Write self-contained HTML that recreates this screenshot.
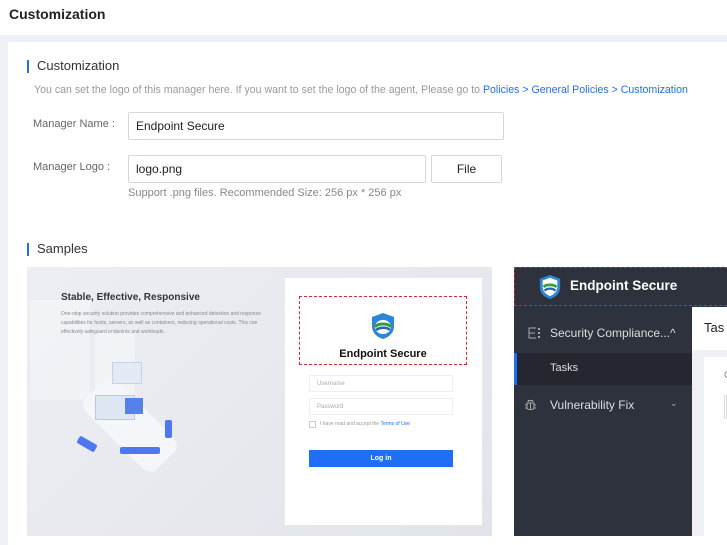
<!DOCTYPE html>
<html><head><style>
*{margin:0;padding:0;box-sizing:border-box}
body{width:727px;height:545px;overflow:hidden;background:#edf0f5;font-family:"Liberation Sans",sans-serif;position:relative}
.a{position:absolute}
.hdr{left:0;top:0;width:727px;height:35px;background:#fff}
.card{left:8px;top:42px;width:719px;height:503px;background:#fff}
.lbl{color:#666;font-size:12px}
.inp{border:1px solid #d4d7de;border-radius:2px;background:#fff;font-size:12px;color:#222;padding-left:7px;line-height:26px}
</style></head><body>
<div class="a hdr"><div class="a" style="left:9px;top:6px;font-size:14px;font-weight:bold;color:#222">Customization</div></div>
<div class="a card"></div>
<div class="a" style="left:27px;top:60px;width:2px;height:13px;background:#1e6ff5"></div>
<div class="a" style="left:37px;top:58px;font-size:13px;color:#333">Customization</div>
<div class="a" style="left:34px;top:84px;font-size:10.6px;color:#999;white-space:nowrap">You can set the logo of this manager here. If you want to set the logo of the agent, Please go to <span style="color:#1e6ff5">Policies &gt; General Policies &gt; Customization</span></div>
<div class="a lbl" style="left:33px;top:118px;font-size:11px">Manager Name :</div>
<div class="a inp" style="left:128px;top:112px;width:376px;height:28px">Endpoint Secure</div>
<div class="a lbl" style="left:33px;top:161px;font-size:11px">Manager Logo :</div>
<div class="a inp" style="left:128px;top:155px;width:298px;height:28px">logo.png</div>
<div class="a inp" style="left:431px;top:155px;width:71px;height:28px;padding:0;text-align:center">File</div>
<div class="a" style="left:128px;top:187px;font-size:11px;color:#888">Support .png files. Recommended Size: 256 px * 256 px</div>
<div class="a" style="left:27px;top:243px;width:2px;height:13px;background:#1e6ff5"></div>
<div class="a" style="left:37px;top:241px;font-size:13px;color:#333">Samples</div>
<!-- sample 1 -->
<div class="a" style="left:27px;top:267px;width:465px;height:269px;background:linear-gradient(135deg,#eceef3,#e6e8ee 60%,#e1e4ea)"></div>
<div class="a" style="left:30px;top:300px;width:60px;height:100px;background:#f2f4f8;opacity:.8"></div>
<div class="a" style="left:95px;top:330px;width:40px;height:80px;background:#f3f5f9;opacity:.8"></div>
<div class="a" style="left:80px;top:385px;width:100px;height:80px;background:#f4f6fa;border-radius:14px;transform:rotate(45deg) scaleY(.55)"></div>
<div class="a" style="left:77px;top:440px;width:20px;height:8px;background:#4d78ee;border-radius:2px;transform:rotate(30deg)"></div>
<div class="a" style="left:120px;top:447px;width:40px;height:7px;background:#4d78ee;border-radius:2px"></div>
<div class="a" style="left:165px;top:420px;width:7px;height:18px;background:#4d78ee;border-radius:2px"></div>
<div class="a" style="left:95px;top:395px;width:40px;height:25px;background:#dfe6f3;border:1px solid #b8c8e6"></div>
<div class="a" style="left:112px;top:362px;width:30px;height:22px;background:#e4eaf5;border:1px solid #c4d2ea"></div>
<div class="a" style="left:125px;top:398px;width:18px;height:16px;background:#5582ea"></div>
<div class="a" style="left:61px;top:292px;font-size:10px;font-weight:bold;color:#333">Stable, Effective, Responsive</div>
<div class="a" style="left:61px;top:310px;width:200px;font-size:5px;line-height:9px;color:#888">One-stop security solution provides comprehensive and enhanced detection and response capabilities for hosts, servers, as well as containers, reducing operational costs. This can effectively safeguard endpoints and workloads.</div>
<div class="a" style="left:285px;top:278px;width:197px;height:247px;background:#fff"></div>
<div class="a" style="left:299px;top:296px;width:168px;height:69px;border:1px dashed #e0242b"></div>
<svg class="a" style="left:370px;top:312px" width="26" height="28" viewBox="0 0 26 28"><path d="M13 1L24 5V14C24 21 19 25 13 27C7 25 2 21 2 14V5Z" fill="#2b87d6"/><ellipse cx="13" cy="15" rx="8" ry="7" fill="#fff"/><path d="M5 15C8 11 18 11 21 15" stroke="#3a9b3a" stroke-width="3" fill="none"/><path d="M6 18C10 15 17 15 20 18" stroke="#2466b0" stroke-width="2.5" fill="none"/></svg>
<div class="a" style="left:299px;top:348px;width:168px;text-align:center;font-size:11px;font-weight:bold;color:#111">Endpoint Secure</div>
<div class="a" style="left:309px;top:375px;width:144px;height:17px;border:1px solid #eee;font-size:6px;color:#aaa;padding:5px 0 0 7px">Username</div>
<div class="a" style="left:309px;top:398px;width:144px;height:17px;border:1px solid #eee;font-size:6px;color:#aaa;padding:5px 0 0 7px">Password</div>
<div class="a" style="left:309px;top:421px;width:7px;height:7px;border:1px solid #ccc"></div>
<div class="a" style="left:320px;top:421px;font-size:5px;color:#999">I have read and accept the <span style="color:#1e6ff5">Terms of Use</span></div>
<div class="a" style="left:309px;top:450px;width:144px;height:17px;background:#1e6ff5;color:#fff;font-size:7px;font-weight:bold;text-align:center;line-height:17px">Log in</div>
<!-- sample 2 -->
<div class="a" style="left:514px;top:267px;width:213px;height:269px;background:#2e323d"></div>
<div class="a" style="left:514px;top:267px;width:213px;height:39px;border:1px dashed #e0242b;border-right:none"></div>
<svg class="a" style="left:538px;top:274px" width="24" height="26" viewBox="0 0 26 28"><path d="M13 1L24 5V14C24 21 19 25 13 27C7 25 2 21 2 14V5Z" fill="#2b87d6"/><path d="M13 4L21 7V14C21 19 17 22 13 24C9 22 5 19 5 14V7Z" fill="#fff"/><path d="M6 14C9 11 17 11 20 14" stroke="#3a9b3a" stroke-width="3" fill="none"/><path d="M7 18C10 15 16 15 19 18" stroke="#2466b0" stroke-width="2.5" fill="none"/></svg>
<div class="a" style="left:570px;top:278px;font-size:13.5px;font-weight:bold;color:#fff">Endpoint Secure</div>
<div class="a" style="left:692px;top:307px;width:35px;height:229px;background:#fff"></div>
<div class="a" style="left:692px;top:350px;width:35px;height:186px;background:#eef0f4"></div>
<div class="a" style="left:704px;top:357px;width:23px;height:179px;background:#fff"></div>
<div class="a" style="left:724px;top:395px;width:3px;height:24px;border:1px solid #ddd"></div>
<div class="a" style="left:704px;top:320px;font-size:13px;color:#222">Tas</div>
<div class="a" style="left:724px;top:370px;font-size:10px;color:#888">C</div>
<svg class="a" style="left:528px;top:327px" width="13" height="12" viewBox="0 0 13 12"><path d="M8 1H1V11H8M1 6H7" stroke="#aaa" fill="none"/><rect x="10" y="1" width="2" height="2" fill="#aaa"/><rect x="10" y="5" width="2" height="2" fill="#aaa"/><rect x="10" y="9" width="2" height="2" fill="#aaa"/></svg>
<div class="a" style="left:550px;top:326px;font-size:12px;color:#ddd">Security Compliance...^</div>
<div class="a" style="left:514px;top:353px;width:178px;height:32px;background:#24272f"></div>
<div class="a" style="left:514px;top:353px;width:3px;height:32px;background:#1e6ff5"></div>
<div class="a" style="left:550px;top:362px;font-size:11px;color:#ddd">Tasks</div>
<svg class="a" style="left:524px;top:399px" width="13" height="13" viewBox="0 0 13 13"><path d="M4 3C4 1 9 1 9 3M3 4H10V9C10 11 3 11 3 9ZM6.5 4V11M1 6H3M10 6H12M1 9H3M10 9H12M4 1L5 2M9 1L8 2" stroke="#aaa" fill="none"/></svg>
<div class="a" style="left:550px;top:398px;font-size:12px;color:#ddd">Vulnerability Fix</div>
<div class="a" style="left:670px;top:398px;font-size:9px;color:#aaa">⌄</div>
</body></html>
